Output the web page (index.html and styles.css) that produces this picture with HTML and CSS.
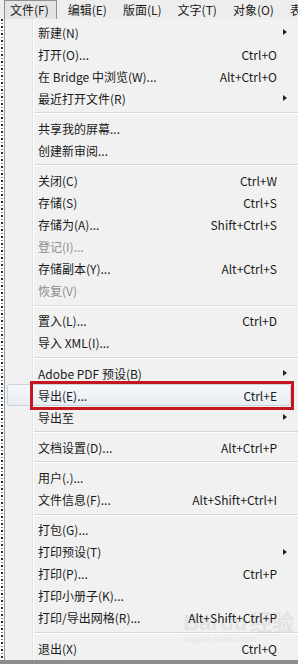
FILE: index.html
```html
<!DOCTYPE html>
<html lang="zh-CN">
  <head>
    <meta charset="UTF-8" />
    <meta name="viewport" content="width=device-width, initial-scale=1.0" />
    <title>文件菜单</title>

    <link rel="stylesheet" href="styles.css">
  </head>

  <body>
    <!-- menu bar -->
    <div class="menubar">
      <span class="bar-item open">文件(F)</span>
      <span class="bar-item">编辑(E)</span>
      <span class="bar-item">版面(L)</span>
      <span class="bar-item">文字(T)</span>
      <span class="bar-item">对象(O)</span>
      <span class="bar-item">表</span>
    </div>

    <div class="workspace">
      <div class="doc-strip"></div>

      <!-- file menu -->
      <div class="menu">
        <div class="item"><span>新建(N)</span><span class="key"></span><span class="sub"></span></div>
        <div class="item"><span>打开(O)...</span><span class="key">Ctrl+O</span><span></span></div>
        <div class="item"><span>在 Bridge 中浏览(W)...</span><span class="key">Alt+Ctrl+O</span><span></span></div>
        <div class="item"><span>最近打开文件(R)</span><span class="key"></span><span class="sub"></span></div>
        <div class="sep"></div>
        <div class="item"><span>共享我的屏幕...</span><span class="key"></span><span></span></div>
        <div class="item"><span>创建新审阅...</span><span class="key"></span><span></span></div>
        <div class="sep"></div>
        <div class="item"><span>关闭(C)</span><span class="key">Ctrl+W</span><span></span></div>
        <div class="item"><span>存储(S)</span><span class="key">Ctrl+S</span><span></span></div>
        <div class="item"><span>存储为(A)...</span><span class="key">Shift+Ctrl+S</span><span></span></div>
        <div class="item disabled"><span>登记(I)...</span><span class="key"></span><span></span></div>
        <div class="item"><span>存储副本(Y)...</span><span class="key">Alt+Ctrl+S</span><span></span></div>
        <div class="item disabled"><span>恢复(V)</span><span class="key"></span><span></span></div>
        <div class="sep"></div>
        <div class="item"><span>置入(L)...</span><span class="key">Ctrl+D</span><span></span></div>
        <div class="item"><span>导入 XML(I)...</span><span class="key"></span><span></span></div>
        <div class="sep"></div>
        <div class="item"><span>Adobe PDF 预设(B)</span><span class="key"></span><span class="sub"></span></div>
        <div class="item active"><span>导出(E)...</span><span class="key">Ctrl+E</span><span></span></div>
        <div class="item"><span>导出至</span><span class="key"></span><span class="sub"></span></div>
        <div class="sep"></div>
        <div class="item"><span>文档设置(D)...</span><span class="key">Alt+Ctrl+P</span><span></span></div>
        <div class="sep"></div>
        <div class="item"><span>用户(.)...</span><span class="key"></span><span></span></div>
        <div class="item"><span>文件信息(F)...</span><span class="key">Alt+Shift+Ctrl+I</span><span></span></div>
        <div class="sep"></div>
        <div class="item"><span>打包(G)...</span><span class="key"></span><span></span></div>
        <div class="item"><span>打印预设(T)</span><span class="key"></span><span class="sub"></span></div>
        <div class="item"><span>打印(P)...</span><span class="key">Ctrl+P</span><span></span></div>
        <div class="item"><span>打印小册子(K)...</span><span class="key"></span><span></span></div>
        <div class="item"><span>打印/导出网格(R)...</span><span class="key">Alt+Shift+Ctrl+P</span><span></span></div>
        <div class="sep"></div>
        <div class="item"><span>退出(X)</span><span class="key">Ctrl+Q</span><span></span></div>

        <!-- watermark -->
        <div class="watermark">Bai<span class="du">du</span>经验<small>jingyan.baidu.com</small></div>
      </div>
    </div>
  </body>
</html>
```

FILE: styles.css
```css
html,
body {
  margin: 0;
  width: 298px;
  height: 664px;
  overflow: hidden;
}

body {
  background-color: #8e8e8e;
  font-family: "Noto Sans CJK SC", "Noto Sans", sans-serif;
  font-size: 12px;
  color: #1a1a1a;
}

.menubar {
  display: flex;
  height: 19px;
  padding-left: 4px;
  background-color: #eeeeee;
  line-height: 19px;
  white-space: nowrap;
}

.bar-item {
  margin-right: 16px;
}

.bar-item.open {
  padding: 0 7px 0 5px;
  margin-right: 11px;
  background-color: #e4e4e4;
  border: 1px solid #8f8f8f;
  border-bottom: none;
  line-height: 18px;
}

.workspace {
  display: flex;
  height: 641px;
}

.doc-strip {
  width: 4px;
  background-color: #ffffff;
  background-image: repeating-linear-gradient(
    to bottom,
    #2b2b2b 0 2px,
    transparent 2px 4px,
    #777 4px 5px,
    transparent 5px 7px
  );
  background-size: 2px 100%;
  background-repeat: no-repeat;
  background-position: 1px 0;
}

.menu {
  position: relative;
  flex: 1;
  padding: 2px 0 2px;
  border-left: 1px solid #979797;
  background-color: #f1f1f1;
  background-image: linear-gradient(
    to right,
    transparent 27px,
    #e2e3e3 27px 28px,
    #ffffff 28px 29px,
    transparent 29px
  );
}

.item {
  position: relative;
  display: grid;
  grid-template-columns: 1fr auto 21px;
  align-items: center;
  height: 22px;
  padding-left: 33px;
  white-space: nowrap;
}

.item span {
  position: relative;
  z-index: 2;
}

.item .key {
  text-align: right;
}

.item .sub::after {
  content: "";
  display: block;
  margin-left: 6px;
  width: 0;
  height: 0;
  border-top: 3.5px solid transparent;
  border-bottom: 3.5px solid transparent;
  border-left: 4px solid #222;
}

.item.disabled {
  color: #8d8d8d;
}

/* hovered row with the red mark round it */
.item.active::before {
  content: "";
  position: absolute;
  left: 2px;
  right: 7px;
  top: 0;
  bottom: 0;
  border: 1px solid #c6d3df;
  border-radius: 3px;
  background: linear-gradient(#f6f8fa, #e8edf2);
}

.item.active::after {
  content: "";
  position: absolute;
  left: 25px;
  right: 4px;
  top: -3px;
  bottom: -4px;
  border: 3px solid #c3161f;
  z-index: 3;
}

.sep {
  height: 8.25px;
  margin-left: 29px;
  background-image: linear-gradient(
    to bottom,
    transparent 3px,
    #d7d7d7 3px 4px,
    #ffffff 4px 5px,
    transparent 5px
  );
}

.watermark {
  position: absolute;
  left: 178px;
  bottom: 16px;
  font-family: "Liberation Sans", sans-serif;
  font-size: 22px;
  font-weight: bold;
  color: rgba(190, 190, 190, 0.3);
  line-height: 22px;
  pointer-events: none;
}

.watermark .du {
  margin: 0 3px;
}

.watermark small {
  display: block;
  font-size: 9px;
  font-weight: normal;
  line-height: 10px;
}
```
